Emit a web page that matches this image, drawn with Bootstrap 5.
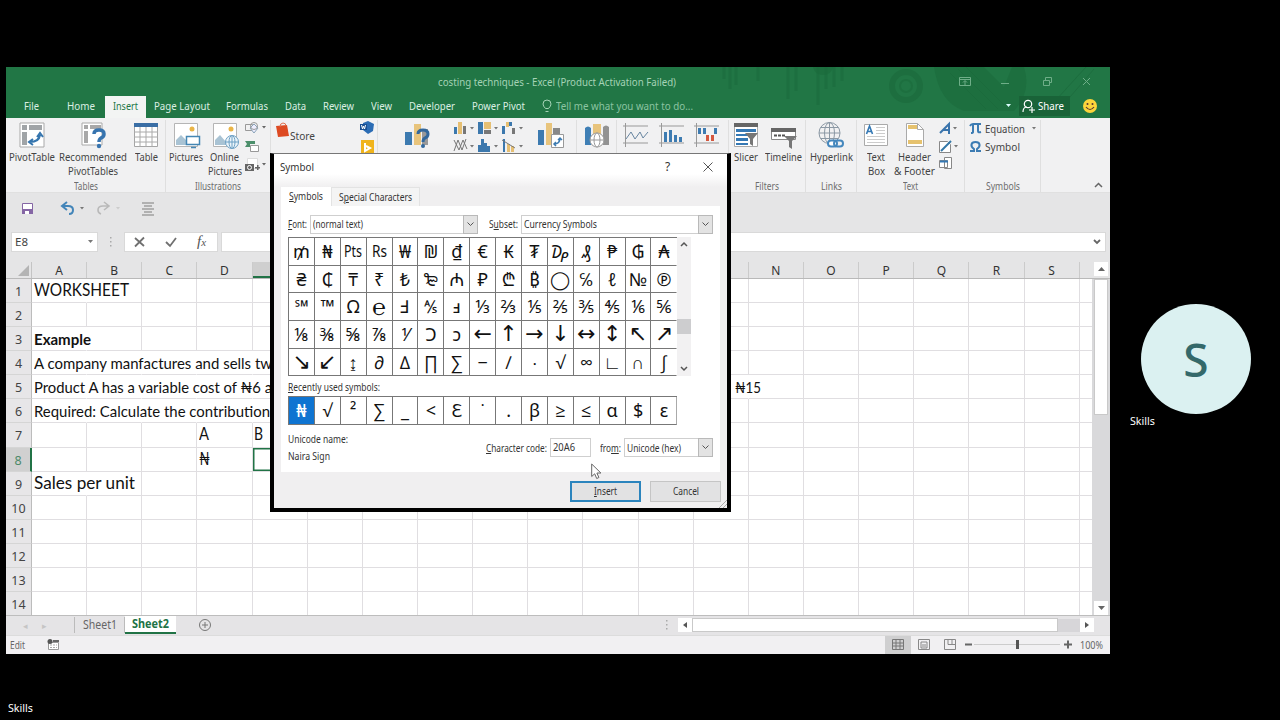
<!DOCTYPE html>
<html lang="en">
<head>
<meta charset="utf-8">
<meta name="viewport" content="width=device-width, initial-scale=1">
<title>costing techniques - Excel</title>
<link href="https://cdn.jsdelivr.net/npm/bootstrap@5.3.0/dist/css/bootstrap.min.css" rel="stylesheet">
<style>
body{background:#000;font-family:"Noto Sans","Open Sans",sans-serif;font-size:11.5px;line-height:14px;color:#444;overflow:hidden}
svg{display:block;overflow:visible;flex:none}
[data-w]{display:inline-block;white-space:nowrap;flex:none;transform-origin:0 50%}
.stage{width:1280px;height:720px;overflow:hidden}
.xl{width:1104px;height:587px;margin:67px 0 0 6px;background:#e5e5e6;overflow:hidden}
.top-green{height:51px;background:#217645;color:#dcefe3}
.top-green .art{left:690px;top:0}
.title-line{height:29px;color:#a5d3b6}
.title-line .doc{margin-left:432px;width:240px;white-space:nowrap}
.tabs-line{height:22px}
.tabs-line .tb{height:22px;line-height:20px;text-align:center;white-space:nowrap}
.tabs-line .on{background:#f3f4f3;color:#217645}
.share{background:#196338;width:51px;height:20px;color:#fff}
.ribbon{height:75px;background:#f1f1f2;border-bottom:1px solid #e0e0e0}
.grp{height:72px;border-right:1px solid #dfdfdf;margin-top:2px;flex:none}
.grp .rows{height:60px}
.grp .gl{line-height:12px;font-size:10px;color:#6d6d6d;text-align:center;white-space:nowrap}
.rb{text-align:center;white-space:nowrap;flex:none;padding-top:2px}
.rb svg{margin:0 auto 2px}
.rb .cap{margin:0 -20px}
.qat{height:39px;padding-top:8px}
.fbar{height:21px}
.fbar .bx{background:#fff;height:20px;border:1px solid #d9d9d9}
.colhead{height:17px;margin-top:9px;border-bottom:1px solid #b9b9b9;color:#333;font-size:12px}
.colhead .c{width:55.15px;text-align:center;line-height:17px;border-right:1px solid #cbcbcb;flex:none}
.colhead .pick{background:#cfcfcf;box-shadow:inset 0 -2px #217346}
.corner{width:26px;border-right:1px solid #c4c4c4;flex:none}
.sheet{height:338px;overflow:hidden}
.cells{width:1086px;overflow:hidden;background:#fff;flex:none}
.r{height:24.13px}
.rh{width:26px;background:#e7e6e8;border-right:1px solid #bcbcbc;border-bottom:1px solid #d5d5d5;color:#444;font-size:12.5px;text-align:center;line-height:26px;flex:none}
.rh.pick{background:#d0d0d0;color:#4c8a69;border-right:2px solid #217346}
.cell{width:55.15px;flex:none;border-right:1px solid #e0dee1;border-bottom:1px solid #e0dee1;font-family:Lato,"Noto Sans",sans-serif;color:#111;font-size:15px;line-height:24px;white-space:nowrap;padding-left:1.5px}
.cell.open{border-right-color:transparent}
.cell.big{font-size:16.5px;line-height:23px}
.cell.sel{box-shadow:inset 0 0 0 1.5px #217346}
.vs{width:18px;background:#d9d9db;padding-left:2px}
.vs .b,.hs .b{background:#fff;width:14px;height:14px}
.tabsrow{height:20px;border-top:1px solid #bdbdbd;background:#e5e4e6;font-size:12px}
.sheet2{width:51px;height:18px;background:#fff;border-bottom:2px solid #217346;color:#217346;font-weight:700;line-height:16px;text-align:center}
.statusbar{height:19px;background:#f1f0f2;border-top:1px solid #dcdcdc;font-size:10px;color:#666}
.people{left:1141px;top:304px;width:110px;height:110px;border-radius:50%;background:#dbf1f1;color:#34696a;font-size:46px;line-height:110px;text-align:center;font-weight:500}
.nm{color:#fff;font-size:10.5px;line-height:14px}
.dlg{left:270px;top:153px;width:461px;height:359px;background:#f0eff0;border:4px solid #000;border-top:1px solid #777;font-size:10.5px;color:#333;white-space:nowrap}
.dlg-title{height:33px;background:linear-gradient(#fff 60%,#f0eff0);font-size:11px}
.dtab{height:19px;line-height:19px;text-align:center}
.pane{width:439px;height:266px;margin-left:7px;background:#fff;padding:9px 0 0 7px}
.combo{height:19px;border:1px solid #cfcfcf;background:#fff;line-height:16px;padding-left:2px}
.combo .arr{width:15px;background:#e3e3e3;border:1px solid #b9b9b9;margin:-1px}
.glyphs{display:grid;grid-template-columns:repeat(15,25.9px);border-top:1px solid #777;border-left:1px solid #777;width:389px;font-size:18px;color:#111}
.glyphs div{border-right:1px solid #777;border-bottom:1px solid #777;height:27.7px;line-height:27px;text-align:center;overflow:hidden}
.glyphs div:nth-child(15n){border-right-color:transparent}
.glyphs.recent div:nth-child(15n){border-right-color:#aaa}
.glyphs .hot{background:#0f74d1;color:#fff;font-weight:500}
.glyphs .arrow{font-family:"DejaVu Sans",sans-serif;font-size:22px;line-height:25px}
.glyphs .word{font-size:16px}
.glyphs .wide{font-size:23px}
.gscroll{width:14px;height:139px;background:#f2f1f2}
.dbtn{width:71px;height:21px;background:#e2e2e3;border:1px solid #c5c5c5;line-height:19px;text-align:center}
.dbtn.main{border:2px solid #2b84bd;line-height:17px}
</style>
</head>
<body>
<div class="stage position-relative">
<div class="xl d-flex flex-column">

 <div class="top-green position-relative">
  <svg class="art position-absolute" width="414" height="51" fill="none" stroke="#1b6a3c">
   <path stroke-width="3" d="M28 0v12M34 0v22M40 0v18M62 0v14M92 0v32M100 0v24M122 0v38M130 0v22M138 0v20M146 0v14" opacity=".55"/>
   <circle cx="210" cy="19" r="14" stroke-width="6" opacity=".65"/><circle cx="210" cy="19" r="6" stroke-width="2" opacity=".6"/>
   <path fill="#1b6a3c" stroke="none" opacity=".6" d="M117 0h20q-2 8-10 8t-10-8M238 0q5 35 30 44h50q18-20 10-44h-12l-8 20-20-20z"/>
   <path opacity=".7" d="M262 2l40 40M270 0l38 38M254 6l36 36M350 44l40-44M362 44l36-42"/>
  </svg>
  <div class="title-line d-flex align-items-center position-relative">
   <div class="doc"><span data-w="238">costing techniques - Excel (Product Activation Failed)</span></div>
   <svg style="margin-left:281px" width="131" height="12" fill="none" stroke="#6fae88"><path d="M.5 1.5h11v8h-11zM.5 3.500h11M6 9V5M4 6.500l2-2 2 2M42 7.500h8M84.500 4.500h6v5h-6zM86.500 4V1.500h6v5h-2M124 2l7 7M131 2l-7 7"/></svg>
  </div>
  <div class="tabs-line d-flex position-relative">
   <div class="tb" style="width:51px"><span data-w="15">File</span></div>
   <div class="tb" style="width:48px"><span data-w="28">Home</span></div>
   <div class="tb on" style="width:41px"><span data-w="25">Insert</span></div>
   <div class="tb" style="width:72px"><span data-w="56">Page Layout</span></div>
   <div class="tb" style="width:58px"><span data-w="42">Formulas</span></div>
   <div class="tb" style="width:39px"><span data-w="21">Data</span></div>
   <div class="tb" style="width:46px"><span data-w="31">Review</span></div>
   <div class="tb" style="width:40px"><span data-w="21">View</span></div>
   <div class="tb" style="width:61px"><span data-w="46">Developer</span></div>
   <div class="tb" style="width:73px"><span data-w="53">Power Pivot</span></div>
   <div class="tb d-flex align-items-center" style="margin-left:7px;height:20px;color:#8cc4a2"><svg class="me-1" width="10" height="14" fill="none" stroke="#a5d3b6"><path d="M3.500 9.500Q1 7 1 5a4 4 0 018 0q0 2-2.500 4.500zM3.500 12.500h3"/></svg><span data-w="137">Tell me what you want to do...</span></div>
   <div class="d-flex align-items-center ms-auto" style="margin-right:13px;height:20px">
    <svg width="6" height="4" fill="#dff"><path d="M0 0h5L2.500 3z"/></svg>
    <div class="share d-flex align-items-center" style="margin-left:7px;padding-left:3px"><svg width="14" height="14" fill="none" stroke="#fff" stroke-width="1.2"><circle cx="6" cy="5" r="3.700"/><path d="M1 13q0-5 4-5M7 11h6M10 8v6"/></svg><span data-w="26" style="margin-left:2px">Share</span></div>
    <svg style="margin-left:13px" width="14" height="14"><circle cx="7" cy="7" r="7" fill="#fcd53b"/><circle cx="4.500" cy="5" r="1" fill="#533"/><circle cx="9.500" cy="5" r="1" fill="#533"/><path d="M3 8q4 5 8 0" fill="none" stroke="#533" stroke-width="1.200"/></svg>
   </div>
  </div>
 </div>

 <div class="ribbon d-flex">
  <div class="grp" style="width:160px"><div class="rows d-flex">
   <div class="rb" style="width:52px"><svg width="26" height="26"><path d="M1 1h24v24H1z" fill="#fff" stroke="#a9a9a9"/><path d="M3 3h5v5H3zM10 3h13v5H10zM3 10h5v13H3z" fill="#a0a4a7"/><path d="M11 20q9 0 10-7M18 15l3-4 3 4M14 17l-4 3 4 3" fill="none" stroke="#3575ae" stroke-width="2"/></svg><div class="cap"><span data-w="46">PivotTable</span></div></div>
   <div class="rb" style="width:70px"><svg width="26" height="26"><path d="M2 1h20v22H2z" fill="#fff" stroke="#a9a9a9"/><path d="M4 3h4v4H4zM10 3h11v4H10zM4 9h4v12H4z" fill="#a8a8a8"/><path d="M14 12q0-4 5-4t5 4q0 3-3 4-2 1-2 4" fill="none" stroke="#3774af" stroke-width="3.500"/><circle cx="19" cy="24" r="2.200" fill="#3774af"/></svg><div class="cap"><span data-w="68">Recommended</span><br><span data-w="50">PivotTables</span></div></div>
   <div class="rb" style="width:36px"><svg width="26" height="26"><path d="M1.500 1.500h23v23h-23z" fill="#fff" stroke="#a5a5a5"/><path d="M1 1h24v4H1z" fill="#3a6ea5"/><path d="M1 10h24M1 15h24M1 20h24M7 5v20M13 5v20M19 5v20" stroke="#aaa"/></svg><div class="cap"><span data-w="23">Table</span></div></div>
  </div><div class="gl"><span data-w="24">Tables</span></div></div>

  <div class="grp" style="width:105px"><div class="rows d-flex">
   <div class="rb" style="width:40px"><svg width="26" height="26"><path d="M1.500 1.500h23v23h-23z" fill="#fff" stroke="#b5b5b5"/><path d="M3 23V18l5-5 5 5 4-4v9z" fill="#a9c3d4"/><circle cx="19" cy="7" r="2.500" fill="#eab547"/><path d="M13.500 14.500h13v8h-13zM18 25.500h5" fill="#fff" stroke="#4486b4" stroke-width="1.500"/></svg><div class="cap"><span data-w="34">Pictures</span></div></div>
   <div class="rb" style="width:37px"><svg width="26" height="26"><path d="M1.500 1.500h23v23h-23z" fill="#fff" stroke="#b5b5b5"/><path d="M3 23V18l5-5 6 7v3z" fill="#a9c3d4"/><circle cx="19" cy="7" r="2.500" fill="#eab547"/><g fill="#edf5fa" stroke="#6b9fc4"><circle cx="20" cy="20" r="6.500"/><ellipse cx="20" cy="20" rx="3" ry="6.500"/><path d="M14 20h12M20 14v12"/></g></svg><div class="cap"><span data-w="29">Online</span><br><span data-w="34">Pictures</span></div></div>
   <svg style="margin-top:1px" width="24" height="54" fill="none" stroke="#999"><path d="M2.500 3.500h7v6h-7z"/><path fill="#eef" stroke="#8aa3b8" d="M11 3l4 4-4 5-4-5z"/><circle cx="11" cy="5" r="3.500"/><path fill="#4c8f6b" stroke="none" d="M2 20h10v3H7v3H2l2-3z"/><path fill="#fff" d="M7.500 24.500h8v6h-8z"/><path fill="#fff" stroke="#ddd" d="M4.500 37.500h10v10h-10z"/><path fill="#666" stroke="none" d="M2 43h9v7H2zM12 46h5v1.500h-5zM14 44h1.500v5H14zM19 5h4l-2 2.500zM19 42h4l-2 2.500z"/><circle cx="6.500" cy="46.500" r="2" stroke="#fff"/></svg>
  </div><div class="gl"><span data-w="46">Illustrations</span></div></div>

  <div class="grp" style="width:107px"><div class="rows d-flex">
   <svg style="margin:3px 0 0 5px" width="14" height="14"><path d="M0 3l11-1 2 11-11 1z" fill="#dd4a22"/><path d="M4 4q0-4 3-4t3 3" fill="none" stroke="#e0704f"/></svg><span data-w="25" style="margin-top:9px;margin-left:0;line-height:14px">Store</span>
   <svg style="margin-left:45px" width="16" height="34"><path d="M3 3l5-2 6 3-1 7-5 3-5-4z" fill="#2b6cb4"/><path d="M0 4h7v6H0z" fill="#174f93"/><path d="M1.500 5l1 4 1-3 1 3 1-4" fill="none" stroke="#fff"/><path d="M1 20h13v14H1z" fill="#f0b41c"/><path d="M5 23v8l5-3-4-2" fill="none" stroke="#fff" stroke-width="2"/></svg>
  </div></div>

  <div class="grp" style="width:199px"><div class="rows d-flex">
   <div class="rb" style="width:78px"><svg width="26" height="26"><path d="M1 10h7v13H1z" fill="#3c7ab0"/><path d="M10 2h7v21h-7z" fill="#e8c47c"/><path d="M18 7h6v16h-6z" fill="#999"/><path d="M14 12q0-4 5-4t5 4q0 3-3 4-2 1-2 4" fill="none" stroke="#33689c" stroke-width="3"/><circle cx="19" cy="24" r="2" fill="#33689c"/></svg></div>
   <svg style="margin:1px 0 0 -3px" width="70" height="32"><g fill="#3c78ad"><path d="M1 6h3v7H1zM25 1h5v12h-5zM49 5h3v8h-3zM56 1h3v4h-3zM25 24h3v7h-3zM28 18h3v13h-3zM31 22h3v9h-3zM34 25h3v6h-3zM50 18h2v13h-2z"/></g><g fill="#e6bf72"><path d="M5 1h4v12H5zM31 1h7v7h-7zM53 1h3v5h-3zM54 23h3v8h-3zM58 25h3v6h-3z"/></g><g fill="#777"><path d="M10 5h3v8h-3zM31 9h7v4h-7zM59 7h3v6h-3zM17 6h4l-2 2.500zM41 6h4l-2 2.500zM66 6h4l-2 2.500zM17 24h4l-2 2.500zM41 24h4l-2 2.500zM66 24h4l-2 2.500z"/></g><path d="M1 30l4-11 4 10 4-11M1 19l5 10 4-10 4 9M49 19l13 8" fill="none" stroke="#777"/></svg>
   <svg style="margin:2px 0 0 15px" width="26" height="26"><path d="M0 8h6v15H0z" fill="#3c7ab0"/><path d="M8 1h6v22H8z" fill="#e8c47c"/><path d="M15 6h7v8h-7z" fill="#888"/><path d="M13.500 12.500h12v13h-12z" fill="#fff" stroke="#999"/><path d="M16 22q6 0 6-6M20 18l2-2 2 2M18 20l-2 2 2 2" fill="none" stroke="#3c7ab0" stroke-width="1.500"/></svg>
  </div></div>

  <div class="grp" style="width:40px"><div class="rb"><svg width="26" height="26"><path d="M1 6q3-3 6 0v17H1z" fill="#3f7fb5"/><path d="M9 2h8v17H9z" fill="#e8c47c"/><path d="M19 5q3-3 6 0v18h-6z" fill="#929292"/><g fill="#fff" stroke="#999"><circle cx="13" cy="18" r="7"/><ellipse cx="13" cy="18" rx="3" ry="7"/><path d="M6 18h14"/></g></svg></div></div>
  <div class="grp" style="width:112px"><svg style="margin:3px 0 0 6px" width="100" height="24" fill="none" stroke="#999"><path d="M0 3h25M0 20h25M2.500 0v24M36 3h25M36 20h25M38.500 0v24M71 3h25M71 20h25M73.500 0v24"/><path stroke="#6785a0" d="M3 16l5-7 4 7 5-7 3 6 5-6"/><path fill="#3d7bb1" stroke="none" d="M41 9h3v10h-3zM46 7h3v12h-3zM51 12h3v7h-3zM56 14h3v5h-3zM75 5h3v6h-3zM80 5h3v6h-3zM91 5h3v6h-3z"/><path fill="#d5583f" stroke="none" d="M83 12h3v6h-3zM88 12h3v6h-3z"/></svg></div>

  <div class="grp" style="width:77px"><div class="rows d-flex">
   <div class="rb" style="width:34px"><svg width="26" height="26"><path d="M1.500 1.500h23v23h-23z" fill="#fff" stroke="#aaa"/><path d="M1 1h24v4H1z" fill="#666"/><path d="M3 7h20v3H3zM3 12h13v2H3zM3 16h12v3H3zM3 21h12v2H3z" fill="#3478b4"/><path d="M12 11h13l-5 6v7l-3-2v-5z" fill="#777"/></svg><div class="cap"><span data-w="24">Slicer</span></div></div>
   <div class="rb" style="width:41px"><svg width="26" height="26"><path d="M.5 6.500h24v11H.5z" fill="#fff" stroke="#888"/><path d="M0 6h25v4H0z" fill="#666"/><path d="M3 13.500h11" stroke="#555" stroke-dasharray="3 1" stroke-width="2"/><path d="M13 14h13l-5 5v8l-3-2v-6z" fill="#777"/></svg><div class="cap"><span data-w="37">Timeline</span></div></div>
  </div><div class="gl"><span data-w="24">Filters</span></div></div>

  <div class="grp" style="width:51px"><div class="rows"><div class="rb"><svg width="26" height="26" fill="none"><g stroke="#8b98a4"><circle cx="11.500" cy="11" r="10.500"/><ellipse cx="11.500" cy="11" rx="5" ry="10.500"/><path d="M1 11h21M2.500 5.500h18M2.500 16.500h18M11.500 0v22"/></g><g stroke="#4587bd" stroke-width="2" ><rect x="10" y="18.500" width="9" height="6" rx="3" fill="#fff"/><rect x="16" y="18.500" width="9" height="6" rx="3"/></g></svg><div class="cap"><span data-w="43">Hyperlink</span></div></div></div><div class="gl"><span data-w="21">Links</span></div></div>

  <div class="grp" style="width:108px"><div class="rows d-flex">
   <div class="rb" style="width:38px"><svg width="26" height="26"><path d="M1.500 2.500h23v21h-23z" fill="#fff" stroke="#aaa"/><path d="M3.500 12l3-8 3 8M4.500 9.500h4" fill="none" stroke="#3478b4" stroke-width="1.600"/><path d="M13 5.500h9M13 8.500h9M13 11.500h9M4 14.500h18M4 17.500h18M4 20.500h18" stroke="#ccc"/></svg><div class="cap"><span data-w="18">Text</span><br><span data-w="17">Box</span></div></div>
   <div class="rb" style="width:39px"><svg width="20" height="26"><path d="M1.500 1.500h11l6 6v17h-17z" fill="#fff" stroke="#aaa"/><path d="M12.500 1.500v6h6" fill="none" stroke="#aaa"/><path d="M3 3h9v4H3zM3 18h14v4H3z" fill="#e6c26e"/></svg><div class="cap"><span data-w="33">Header</span><br><span data-w="41">&amp; Footer</span></div></div>
   <svg style="margin:2px 0 0 5px" width="22" height="52" fill="none" stroke="#888"><path d="M1 11l9-9v10M4 8h6" stroke="#3a74ac" stroke-width="2"/><path fill="#fff" d="M.5 19.500h8l3 3v8H.5z"/><path d="M2 29l10-10" stroke="#3478a8" stroke-width="2"/><path fill="#fff" d="M5.500 35.500h7v11h-7zM.5 38.500h8v7h-8z"/><path d="M1 39.500h8" stroke="#3478b4" stroke-width="2"/><path fill="#777" stroke="none" d="M14 5h4l-2 2.500zM15 23h4l-2 2.500z"/></svg>
  </div><div class="gl"><span data-w="15">Text</span></div></div>

  <div class="grp" style="width:76px"><div class="rows">
   <div class="d-flex align-items-center" style="padding:0 0 0 5px;height:17px"><svg width="11" height="11" fill="none" stroke="#3d7cb3" stroke-width="2"><path d="M0 3q1-2 3-2h8M3 1v8q0 1-2 1M8 1v7q0 2 3 1"/></svg><span data-w="40" style="margin-left:4px">Equation</span><svg style="margin-left:7px" width="5" height="4" fill="#777"><path d="M0 0h4L2 2.500z"/></svg></div>
   <div class="d-flex align-items-center" style="padding-left:5px;height:19px"><svg width="11" height="11" fill="none" stroke="#3d7cb3" stroke-width="2"><path d="M0 10h4V8Q1 6 1.500 3.500T5.500 1t4 2.500T7 8v2h4"/></svg><span data-w="35" style="margin-left:4px">Symbol</span></div>
  </div><div class="gl"><span data-w="34">Symbols</span></div></div>
  <svg class="align-self-end ms-auto" style="margin:0 7px 2px 0" width="9" height="9" fill="none" stroke="#666" stroke-width="1.500"><path d="M1 6l3.500-3.500L8 6"/></svg>
 </div>

 <div class="qat"><svg style="margin-left:15px" width="150" height="16" fill="none"><path d="M1.500 2.500h10v10h-10z" stroke="#8566a5" fill="#fff"/><path d="M1 8h11v5H1z" fill="#8566a5"/><path d="M4 10h4v3H4z" fill="#fff"/><path d="M46 1l-5 4 5 4M41 5h6q5 0 5 4t-4 4" stroke="#4385b9" stroke-width="2"/><path d="M59 6h4l-2 2.500z" fill="#777"/><path d="M83 1l5 4-5 4M88 5h-6q-5 0-5 4 0 3 3 4" stroke="#b9b9b9" stroke-width="1.600"/><path d="M95 6h4l-2 2.500z" fill="#ccc"/><path d="M121 2h12M123 5h8M121 8h12M123 11h8M121 14h12" stroke="#a0a0a0" stroke-width="1.300"/></svg></div>

 <div class="fbar d-flex">
  <div class="bx d-flex align-items-center justify-content-between" style="width:87px;margin-left:5px;padding:0 4px 0 3px"><span data-w="13">E8</span><svg width="5" height="4" fill="#777"><path d="M0 0h5L2.500 3z"/></svg></div>
  <svg style="margin:5px 0 0 11px" width="4" height="11" fill="#aaa"><path d="M1 0h1.500v1.500H1zM1 4h1.500v1.500H1zM1 8h1.500v1.500H1z"/></svg>
  <div class="bx d-flex align-items-center" style="width:94px;margin-left:11px"><svg style="margin-left:9px" width="44" height="12" fill="none" stroke="#707070" stroke-width="1.800"><path d="M1 2l9 8M10 1.500L1 10.500M32 6l4 4 6-8"/></svg><span style="margin-left:19px;font:italic 15px 'Liberation Serif',serif;color:#555">f<small style="font-size:11px">x</small></span></div>
  <div class="bx d-flex align-items-center justify-content-end" style="width:885px;margin-left:3px;padding-right:4px"><svg width="8" height="6" fill="none" stroke="#666" stroke-width="1.800"><path d="M1 1l3 3 3-3"/></svg></div>
 </div>

 <div class="colhead d-flex" id="heads"><div class="corner d-flex justify-content-end align-items-end"><svg width="14" height="14"><path d="M12 1v11H1z" fill="#b4b4b4"/></svg></div></div>

 <div class="sheet d-flex">
  <div class="cells" id="cells"></div>
  <div class="vs d-flex flex-column">
   <div style="height:136px;background:#fff;border:1px solid #c9c9c9;width:14px"></div>
   <div class="b d-flex align-items-center justify-content-center mt-auto"><svg width="7" height="4" fill="#666"><path d="M0 0h7L3.500 4z"/></svg></div>
  </div>
 </div>

 <div class="tabsrow d-flex">
  <div style="width:68px;color:#c5c5c5;font-size:9px;padding:3px 0 0 17px">◂<span style="margin-left:14px">▸</span></div>
  <div style="width:51px;border-left:1px solid #bbb;border-right:1px solid #bbb;text-align:center;line-height:16px;color:#666;height:16px;margin-top:1px"><span data-w="34">Sheet1</span></div>
  <div class="sheet2"><span data-w="37">Sheet2</span></div>
  <svg style="margin:3px 0 0 23px" width="12" height="12" fill="none" stroke="#777"><circle cx="6" cy="6" r="5.500"/><path d="M3 6h6M6 3v6"/></svg>
  <svg style="margin:4px 0 0 454px" width="4" height="11" fill="#aaa"><path d="M1 0h1.500v1.500H1zM1 4h1.500v1.500H1zM1 8h1.500v1.500H1z"/></svg>
  <div class="hs d-flex align-items-center" style="margin:2px 0 0 9px;height:14px">
   <div class="b d-flex align-items-center justify-content-center"><svg width="4" height="6" fill="#555"><path d="M4 0v6L0 3z"/></svg></div>
   <div style="width:366px;height:14px;background:#fff;border:1px solid #c9c9c9"></div><div style="width:22px;height:13px;background:#d7d6d9"></div>
   <div class="b d-flex align-items-center justify-content-center"><svg width="4" height="6" fill="#555"><path d="M0 0v6l4-3z"/></svg></div>
  </div>
 </div>

 <div class="statusbar d-flex align-items-center">
  <span data-w="15" style="margin-left:4px">Edit</span>
  <svg style="margin-left:22px" width="12" height="12"><path d="M1.500 3.500h10v7h-10z" fill="#fff" stroke="#999"/><circle cx="3" cy="2.500" r="2.500" fill="#555"/><path d="M6 1h6v2H6z" fill="#666"/><path d="M3 6h7M3 8.500h7" stroke="#aaa" stroke-dasharray="2 1"/></svg>
  <div class="d-flex align-items-center justify-content-center" style="width:26px;height:18px;background:#cfcfd0;margin-left:826px"><svg width="12" height="11" fill="none" stroke="#777"><path d="M.5.5h11v10H.5zM.5 4h11M.5 7h11M4 .5v10M8 .5v10"/></svg></div>
  <svg style="margin-left:7px" width="38" height="11" fill="none" stroke="#888"><path d="M.5.500h11v10H.5zM3 3h6v6H3zM5 5v3M7 5v3M26.500.500h11v10h-11zM30 .5v5h7M34 .5v5"/></svg>
  <svg style="margin-left:9px" width="105" height="12" fill="none" stroke="#666"><path d="M0 5.500h7M99 5.500h8M103 1.500v8" stroke-width="2"/><path d="M9 5.500h86" stroke="#ccc"/><path d="M52.500 1v9" stroke-width="3" stroke="#555"/></svg>
  <span data-w="23" style="margin-left:10px">100%</span>
 </div>
</div>

<div class="people position-absolute">S</div>
<div class="nm position-absolute" style="left:1130px;top:414px"><span data-w="25">Skills</span></div>
<div class="nm position-absolute" style="left:8px;top:701px"><span data-w="25">Skills</span></div>

<div class="dlg position-absolute">
 <div class="dlg-title d-flex"><span style="margin:6px 0 0 6px" data-w="34">Symbol</span><span style="margin:6px 0 0 351px;font-size:12px">?</span><svg style="margin:8px 0 0 33px" width="10" height="10" stroke="#555"><path d="M.5.5l9 9M9.500.500l-9 9"/></svg></div>
 <div class="d-flex" style="padding-left:7px">
  <div class="dtab" style="width:50px;background:#fff"><span data-w="34"><u>S</u>ymbols</span></div>
  <div class="dtab" style="width:89px;border:1px solid #e3e3e3;border-bottom:0;background:#f4f4f4;line-height:18px"><span data-w="73">S<u>p</u>ecial Characters</span></div>
 </div>
 <div class="pane">
  <div class="d-flex">
   <span style="margin-top:2px;width:22px"><span data-w="19"><u>F</u>ont:</span></span>
   <div class="combo d-flex justify-content-between" style="width:168px"><span data-w="50">(normal text)</span><div class="arr d-flex align-items-center justify-content-center"><svg width="7" height="5" fill="none" stroke="#555"><path d="M.5.5l3 3 3-3"/></svg></div></div>
   <span style="margin:2px 0 0 11px;width:32px"><span data-w="29">S<u>u</u>bset:</span></span>
   <div class="combo d-flex justify-content-between" style="width:192px"><span data-w="73">Currency Symbols</span><div class="arr d-flex align-items-center justify-content-center"><svg width="7" height="5" fill="none" stroke="#555"><path d="M.5.5l3 3 3-3"/></svg></div></div>
  </div>
  <div class="d-flex" style="margin-top:3px">
   <div class="glyphs" id="glyphs"></div>
   <div class="gscroll d-flex flex-column align-items-center" style="padding:5px 0">
    <svg width="8" height="5" fill="none" stroke="#555" stroke-width="1.500"><path d="M1 4l3-3 3 3"/></svg>
    <div style="width:14px;height:15px;background:#cdcdcf;margin-top:72px"></div>
    <svg class="mt-auto" width="8" height="5" fill="none" stroke="#555" stroke-width="1.500"><path d="M1 1l3 3 3-3"/></svg>
   </div>
  </div>
  <div style="margin-top:4px;height:16px"><span data-w="92"><u>R</u>ecently used symbols:</span></div>
  <div class="glyphs recent" id="recent"></div>
  <div class="d-flex" style="margin-top:7px">
   <div style="width:198px"><div><span data-w="60">Unicode name:</span></div><div style="margin-top:3px"><span data-w="42">Naira Sign</span></div></div>
   <span style="margin-top:9px;width:64px"><span data-w="61"><u>C</u>haracter code:</span></span>
   <div class="combo" style="width:41px;margin-top:6px"><span data-w="22">20A6</span></div>
   <span style="margin:9px 0 0 9px;width:24px"><span data-w="21">fro<u>m</u>:</span></span>
   <div class="combo d-flex justify-content-between" style="width:89px;margin-top:6px;line-height:18px"><span data-w="54">Unicode (hex)</span><div class="arr d-flex align-items-center justify-content-center"><svg width="7" height="5" fill="none" stroke="#555"><path d="M.5.5l3 3 3-3"/></svg></div></div>
  </div>
 </div>
 <div class="d-flex justify-content-end" style="margin-top:9px;padding-right:6px;gap:9px"><div class="dbtn main"><span data-w="23"><u>I</u>nsert</span></div><div class="dbtn"><span data-w="26">Cancel</span></div></div>
 <svg class="position-absolute" style="right:0;bottom:0" width="8" height="8" stroke="#aaa"><path d="M0 8l8-8M4 8l4-4"/></svg>
</div>
<svg class="position-absolute" style="left:591px;top:463px" width="12" height="17"><path d="M.7 1v12.500l3-2.700 2 4.700 2.200-1-2-4.500h4z" fill="#fff" stroke="#666"/></svg>
</div>

<script>
const symbols = '₥ ₦ Pts Rs ₩ ₪ ₫ € ₭ ₮ ₯ ₰ ₱ ₲ ₳ ₴ ₵ ₸ ₹ ₺ ₻ ₼ ₽ ₾ ₿ ◯ ℅ ℓ № ℗ ℠ ™ Ω ℮ Ⅎ ⅍ ⅎ ⅓ ⅔ ⅕ ⅖ ⅗ ⅘ ⅙ ⅚ ⅛ ⅜ ⅝ ⅞ ⅟ Ↄ ↄ ← ↑ → ↓ ↔ ↕ ↖ ↗ ↘ ↙ ↨ ∂ ∆ ∏ ∑ − ∕ ∙ √ ∞ ∟ ∩ ∫'.split(' ');
const look = s => '←↑→↓↔↕↖↗↘↙'.includes(s) ? 'arrow' : s === '℮' ? 'wide' : s.length > 1 ? 'word' : '';
document.getElementById('glyphs').innerHTML = symbols.map(s => `<div class="${look(s)}">${s.length > 1 ? `<span data-w="${s === 'Pts' ? 18 : 15}">${s}</span>` : s}</div>`).join('');
document.getElementById('recent').innerHTML = [...'₦√²∑_<Ɛ˙.β≥≤α$ε'].map((s, i) => `<div class="${i ? '' : 'hot'}">${s === '<' ? '&lt;' : s}</div>`).join('');

const heads = document.getElementById('heads');
[...'ABCDEFGHIJKLMNOPQRS'].forEach(c => heads.insertAdjacentHTML('beforeend', `<div class="c${c === 'E' ? ' pick' : ''}">${c}</div>`));
heads.insertAdjacentHTML('beforeend', '<div class="vs ms-auto" style="background:none"><div class="b d-flex align-items-center justify-content-center"><svg width="7" height="4" fill="#666"><path d="M0 4h7L3.500 0z"/></svg></div></div>');

// key: row,column -> [text, width, extra class]; open: first n columns without a right rule
const text = {
  '1,0': ['WORKSHEET', 95, 'big'], '3,0': ['Example', 57, 'fw-bold'],
  '4,0': ['A company manfactures and sells tw', 238, ''],
  '5,0': ['Product A has a variable cost of ₦6 a', 238, ''],
  '6,0': ['Required: Calculate the contribution', 236, ''],
  '7,3': ['A', 10, 'big'], '7,4': ['B', 9, 'big'], '8,3': ['₦', 11, 'big'],
  '9,0': ['Sales per unit', 101, 'big'], '5,12': ['₦15', 26, 'late']
};
const open = {1: 1, 3: 1, 4: 12, 5: 13, 6: 12, 9: 1};
let html = '';
for (let r = 1; r <= 14; r++) {
  html += `<div class="r d-flex"><div class="rh${r === 8 ? ' pick' : ''}">${r}</div>`;
  for (let c = 0; c < 20; c++) {
    const t = text[r + ',' + c];
    html += `<div class="cell ${c < (open[r] || 0) ? 'open' : ''} ${t ? t[2] : ''} ${r === 8 && c === 4 ? 'sel' : ''}">${t ? `<span ${t[2] === 'late' ? 'style="margin-left:40px"' : ''} data-w="${t[1]}">${t[0]}</span>` : ''}</div>`;
  }
  html += '</div>';
}
document.getElementById('cells').innerHTML = html;

// condense or widen each label to its set width
document.querySelectorAll('[data-w]').forEach(el => {
  const w = el.getBoundingClientRect().width;
  el.style.transform = `scaleX(${el.dataset.w / w})`;
  el.style.marginRight = (el.dataset.w - w) + 'px';
});
</script>
<script src="https://cdn.jsdelivr.net/npm/bootstrap@5.3.0/dist/js/bootstrap.bundle.min.js"></script>
</body>
</html>
